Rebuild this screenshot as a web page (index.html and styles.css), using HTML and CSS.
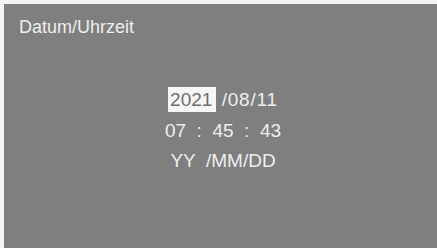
FILE: index.html
```html
<!DOCTYPE html>
<html>
<head>
<meta charset="utf-8">
<link rel="stylesheet" href="styles.css">
</head>
<body>
<div class="screen">
  <div class="title">Datum/Uhrzeit</div>
  <div class="clock">
    <div class="line"><span class="sel">2021</span> <span class="date">/08/11</span></div>
    <div class="line">07  :  45  :  43</div>
    <div class="line">YY  /MM/DD</div>
  </div>
</div>
</body>
</html>
```
FILE: styles.css
```css
html, body {
  margin: 0;
  padding: 0;
  background: #f4f4f4;
  width: 437px;
  height: 248px;
  overflow: hidden;
}
.screen {
  margin: 4px 0 0 4px;
  width: 433px;
  height: 244px;
  background: #7f7f7f;
  color: #eeeeee;
  font-family: "Liberation Sans", Arial, sans-serif;
  box-sizing: border-box;
  padding-top: 13px;
}
.title {
  padding-left: 15px;
  font-size: 18px;
  line-height: 21px;
}
.clock {
  margin-top: 47px;
  display: flex;
  flex-direction: column;
  align-items: center;
  padding-left: 5px;
  font-size: 19px;
  line-height: 30.5px;
}
.line {
  white-space: pre;
}
.date {
  letter-spacing: 0.8px;
}
.sel {
  background: #f6f6f6;
  color: #6e6e6e;
  padding: 2px 4px 2px 2px;
}
```
